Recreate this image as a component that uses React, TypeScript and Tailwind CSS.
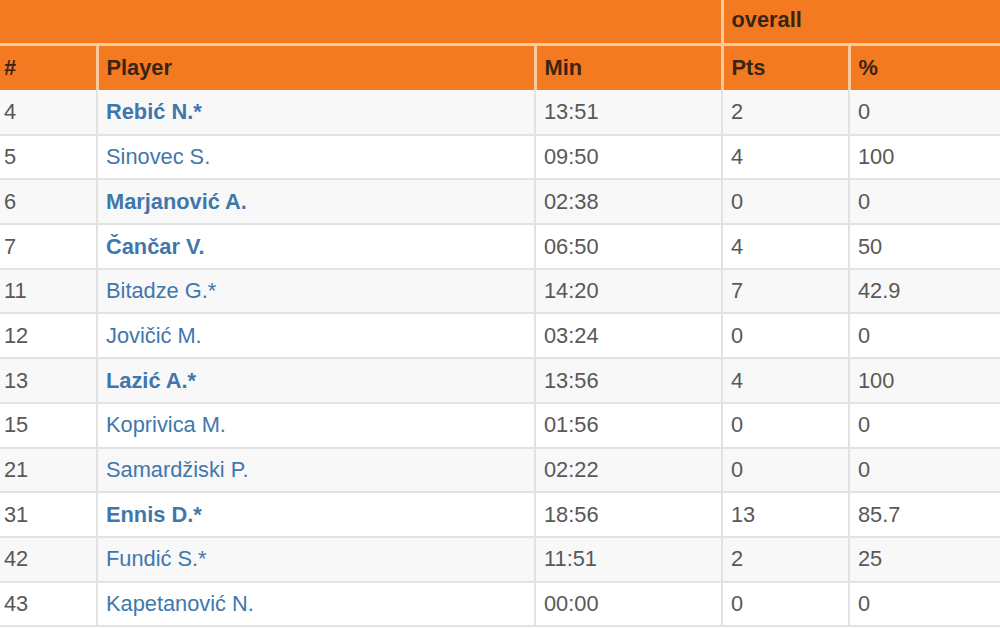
import React from "react";

const rows: [string, string, boolean, string, string, string][] = [
  ["4", "Rebić N.*", true, "13:51", "2", "0"],
  ["5", "Sinovec S.", false, "09:50", "4", "100"],
  ["6", "Marjanović A.", true, "02:38", "0", "0"],
  ["7", "Čančar V.", true, "06:50", "4", "50"],
  ["11", "Bitadze G.*", false, "14:20", "7", "42.9"],
  ["12", "Jovičić M.", false, "03:24", "0", "0"],
  ["13", "Lazić A.*", true, "13:56", "4", "100"],
  ["15", "Koprivica M.", false, "01:56", "0", "0"],
  ["21", "Samardžiski P.", false, "02:22", "0", "0"],
  ["31", "Ennis D.*", true, "18:56", "13", "85.7"],
  ["42", "Fundić S.*", false, "11:51", "2", "25"],
  ["43", "Kapetanović N.", false, "00:00", "0", "0"],
];

export default function App() {
  return (
    <div
      className="w-[1000px] h-[629px] overflow-hidden bg-white"
      style={{ fontFamily: '"Liberation Sans", Arial, sans-serif' }}
    >
      <table className="border-collapse table-fixed w-[1000px] text-[21.8px] leading-none">
        <colgroup>
          <col className="w-[97px]" />
          <col className="w-[438px]" />
          <col className="w-[187px]" />
          <col className="w-[127px]" />
          <col className="w-[151px]" />
        </colgroup>
        <thead>
          <tr className="h-[44px] bg-[#f47a22] text-[#3a2512] font-bold">
            <th colSpan={3} className="border-b-[3px] border-r-[3px] border-[#f9caa0] p-0"></th>
            <th colSpan={2} className="border-b-[3px] border-[#f9caa0] text-left align-middle pl-[8px] pb-[3px] font-bold">
              overall
            </th>
          </tr>
          <tr className="h-[46px] bg-[#f47a22] text-[#3a2512]">
            <th className="text-left pl-[4px] border-r-[3px] border-[#f9caa0] font-bold">#</th>
            <th className="text-left pl-[8px] border-r-[3px] border-[#f9caa0] font-bold">Player</th>
            <th className="text-left pl-[8px] border-r-[3px] border-[#f9caa0] font-bold">Min</th>
            <th className="text-left pl-[8px] border-r-[3px] border-[#f9caa0] font-bold">Pts</th>
            <th className="text-left pl-[8px] font-bold">%</th>
          </tr>
        </thead>
        <tbody>
          {rows.map((r, i) => (
            <tr
              key={r[0]}
              className={`h-[44.7px] ${i % 2 === 0 ? "bg-[#f8f8f8]" : "bg-white"} text-[#585858]`}
            >
              <td className="pl-[4px] border-b-2 border-r-2 border-[#e2e2e2]">{r[0]}</td>
              <td
                className={`pl-[8px] border-b-2 border-r-2 border-[#e2e2e2] text-[#3f77ad] ${r[2] ? "font-bold" : ""}`}
              >
                {r[1]}
              </td>
              <td className="pl-[8px] border-b-2 border-r-2 border-[#e2e2e2]">{r[3]}</td>
              <td className="pl-[8px] border-b-2 border-r-2 border-[#e2e2e2]">{r[4]}</td>
              <td className="pl-[8px] border-b-2 border-[#e2e2e2]">{r[5]}</td>
            </tr>
          ))}
        </tbody>
      </table>
    </div>
  );
}
